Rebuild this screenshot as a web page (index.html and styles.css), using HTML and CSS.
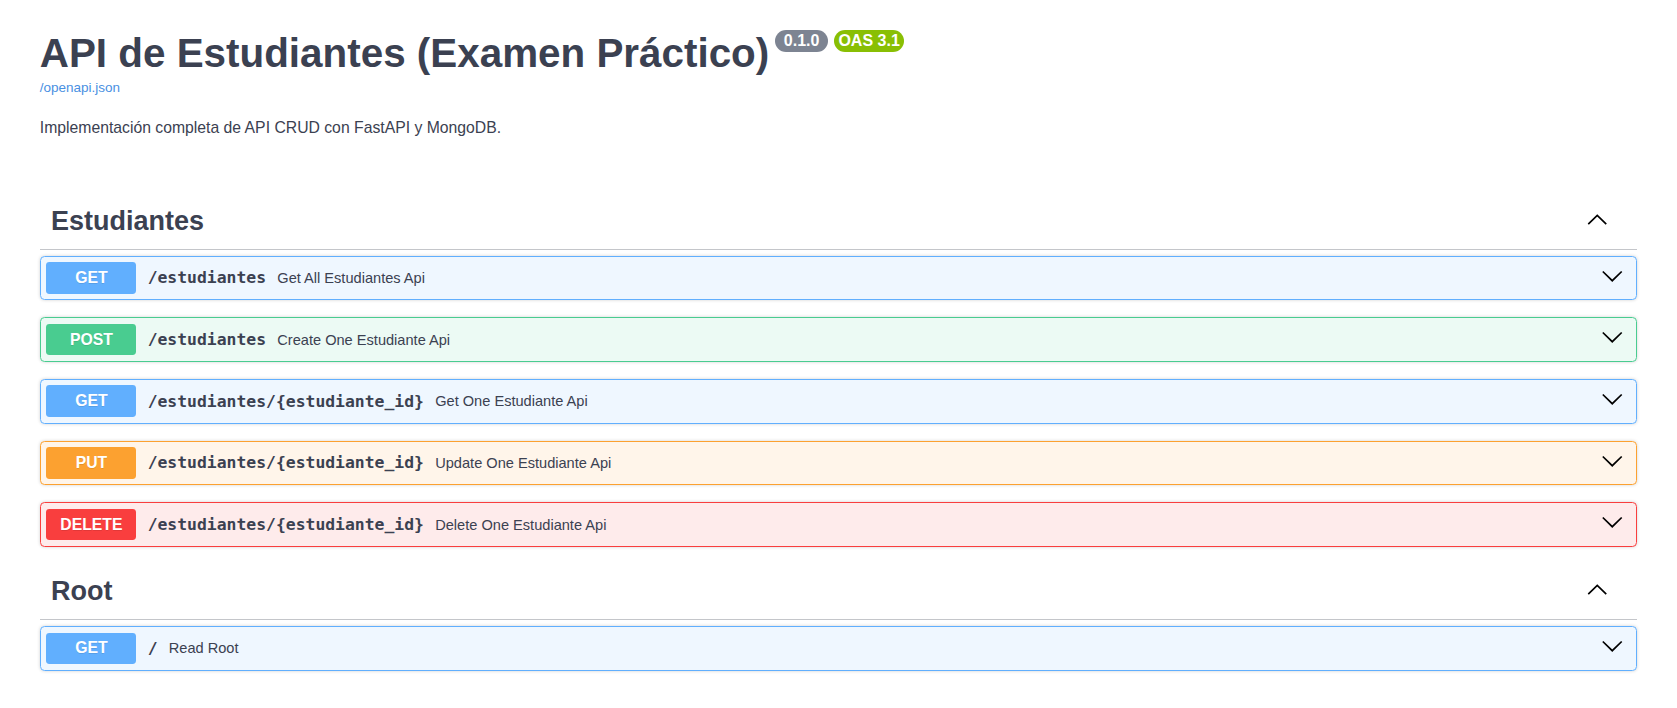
FILE: index.html
```html
<!DOCTYPE html>
<html lang="es">
<head>
<meta charset="utf-8">
<title>API de Estudiantes (Examen Práctico) - Swagger UI</title>
<link rel="stylesheet" href="styles.css">
</head>
<body>
<div class="wrapper">
  <section class="info">
    <div class="title-row">
      <h2 class="title">API de Estudiantes (Examen Práctico)</h2>
      <span class="badge"> 0.1.0 </span>
      <span class="badge badge-oas">OAS 3.1</span>
    </div>
    <a class="link" href="#">/openapi.json</a>
    <p class="description">Implementación completa de API CRUD con FastAPI y MongoDB.</p>
  </section>

  <section class="tag-section">
    <h3 class="tag">
      <span class="tag-name">Estudiantes</span>
      <button class="tag-btn" type="button" aria-label="Collapse">
        <svg class="chev" width="22.5" height="22.5" viewBox="0 0 20 20"><path d="M2 12.6 L10 4.8 L18 12.6"/></svg>
      </button>
    </h3>
    <div class="opblock opblock-get">
      <div class="summary">
        <span class="method">GET</span>
        <span class="path">/estudiantes</span>
        <span class="desc">Get All Estudiantes Api</span>
        <button class="arrow-btn" type="button" aria-label="Expand"><svg class="chev" width="22.5" height="22.5" viewBox="0 0 20 20"><path d="M1.6 4 L10 12.2 L18.4 4"/></svg></button>
      </div>
    </div>
    <div class="opblock opblock-post">
      <div class="summary">
        <span class="method">POST</span>
        <span class="path">/estudiantes</span>
        <span class="desc">Create One Estudiante Api</span>
        <button class="arrow-btn" type="button" aria-label="Expand"><svg class="chev" width="22.5" height="22.5" viewBox="0 0 20 20"><path d="M1.6 4 L10 12.2 L18.4 4"/></svg></button>
      </div>
    </div>
    <div class="opblock opblock-get">
      <div class="summary">
        <span class="method">GET</span>
        <span class="path">/estudiantes/{estudiante_id}</span>
        <span class="desc">Get One Estudiante Api</span>
        <button class="arrow-btn" type="button" aria-label="Expand"><svg class="chev" width="22.5" height="22.5" viewBox="0 0 20 20"><path d="M1.6 4 L10 12.2 L18.4 4"/></svg></button>
      </div>
    </div>
    <div class="opblock opblock-put">
      <div class="summary">
        <span class="method">PUT</span>
        <span class="path">/estudiantes/{estudiante_id}</span>
        <span class="desc">Update One Estudiante Api</span>
        <button class="arrow-btn" type="button" aria-label="Expand"><svg class="chev" width="22.5" height="22.5" viewBox="0 0 20 20"><path d="M1.6 4 L10 12.2 L18.4 4"/></svg></button>
      </div>
    </div>
    <div class="opblock opblock-delete">
      <div class="summary">
        <span class="method">DELETE</span>
        <span class="path">/estudiantes/{estudiante_id}</span>
        <span class="desc">Delete One Estudiante Api</span>
        <button class="arrow-btn" type="button" aria-label="Expand"><svg class="chev" width="22.5" height="22.5" viewBox="0 0 20 20"><path d="M1.6 4 L10 12.2 L18.4 4"/></svg></button>
      </div>
    </div>
  </section>

  <section class="tag-section">
    <h3 class="tag">
      <span class="tag-name">Root</span>
      <button class="tag-btn" type="button" aria-label="Collapse">
        <svg class="chev" width="22.5" height="22.5" viewBox="0 0 20 20"><path d="M2 12.6 L10 4.8 L18 12.6"/></svg>
      </button>
    </h3>
    <div class="opblock opblock-get">
      <div class="summary">
        <span class="method">GET</span>
        <span class="path">/</span>
        <span class="desc">Read Root</span>
        <button class="arrow-btn" type="button" aria-label="Expand"><svg class="chev" width="22.5" height="22.5" viewBox="0 0 20 20"><path d="M1.6 4 L10 12.2 L18.4 4"/></svg></button>
      </div>
    </div>
  </section>
</div>
</body>
</html>
```
FILE: styles.css
```css
body {
  margin: 0;
  background: #fff;
  color: #3b4151;
  font-family: "Liberation Sans", Arial, sans-serif;
}

.wrapper {
  max-width: 1642.5px;
  margin: 0 auto;
  padding: 0 22.5px;
  box-sizing: border-box;
}

/* Info header */
.info {
  padding-top: 29.6px;
  margin-bottom: 56.9px;
}

.title-row {
  display: flex;
  align-items: flex-start;
}

.title {
  margin: 0;
  font-size: 40.4px;
  line-height: 47px;
  font-weight: 700;
  color: #3b4151;
}

.badge {
  margin-left: 5.6px;
  padding: 2.25px 4.5px;
  border-radius: 64px;
  background: #7d8492;
  color: #fff;
  font-size: 16px;
  line-height: 18px;
  font-weight: 700;
  white-space: pre;
}

.badge-oas {
  background: #89bf04;
}

.link {
  display: block;
  margin-top: 3px;
  font-size: 13.5px;
  line-height: 15.5px;
  color: #4990e2;
  text-decoration: none;
}

.description {
  margin: 23.5px 0 0;
  font-size: 15.75px;
  line-height: 18px;
  color: #3b4151;
}

/* Tag sections */
.tag {
  display: flex;
  align-items: center;
  margin: 0 0 5.6px;
  padding: 11.25px 22.5px 11.25px 11.25px;
  min-height: 33px;
  border-bottom: 1px solid rgba(59, 65, 81, 0.3);
  font-size: 27px;
  font-weight: 700;
  color: #3b4151;
}

.tag-name {
  flex: 1;
}

.tag-btn,
.arrow-btn {
  display: flex;
  background: none;
  border: 0;
  padding: 1px 6.75px;
  cursor: pointer;
}

.chev {
  display: block;
  fill: none;
  stroke: #000;
  stroke-width: 1.5;
  stroke-linejoin: miter;
}

/* Operation blocks */
.opblock {
  margin: 0 0 16.9px;
  border: 1px solid #000;
  border-radius: 4.5px;
  box-shadow: 0 0 3.4px rgba(0, 0, 0, 0.19);
}

.summary {
  display: flex;
  align-items: center;
  padding: 5.625px;
}

.method {
  min-width: 90px;
  padding: 6.75px 0;
  border-radius: 3.4px;
  color: #fff;
  font-size: 15.75px;
  line-height: 18px;
  font-weight: 700;
  text-align: center;
  text-shadow: 0 1px 0 rgba(0, 0, 0, 0.1);
}

.path {
  padding: 0 11.25px;
  font-family: "DejaVu Sans Mono", "Liberation Mono", monospace;
  font-size: 16.4px;
  font-weight: 700;
  color: #3b4151;
}

.desc {
  flex: 1 1 auto;
  font-size: 14.6px;
  color: #3b4151;
}

.opblock-get {
  background: rgba(97, 175, 254, 0.1);
  border-color: #61affe;
}
.opblock-get .method { background: #61affe; }

.opblock-post {
  background: rgba(73, 204, 144, 0.1);
  border-color: #49cc90;
}
.opblock-post .method { background: #49cc90; }

.opblock-put {
  background: rgba(252, 161, 48, 0.1);
  border-color: #fca130;
}
.opblock-put .method { background: #fca130; }

.opblock-delete {
  background: rgba(249, 62, 62, 0.1);
  border-color: #f93e3e;
}
.opblock-delete .method { background: #f93e3e; }
```
